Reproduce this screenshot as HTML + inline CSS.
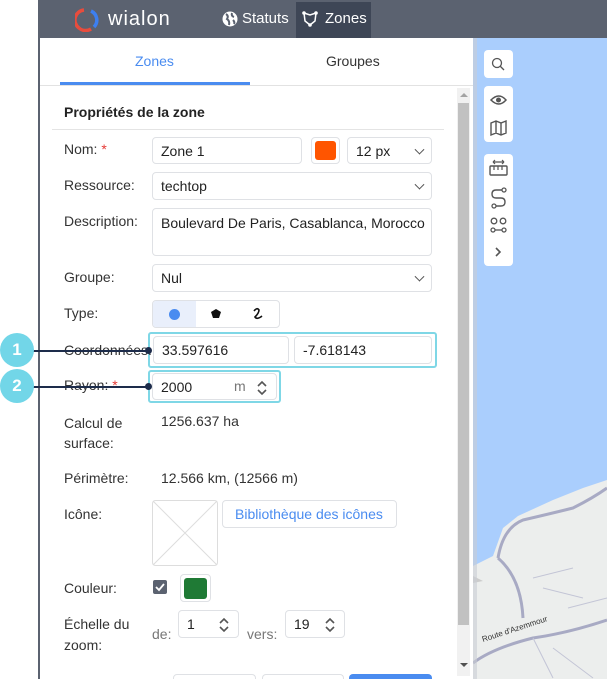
<!DOCTYPE html>
<html><head><meta charset="utf-8"><style>
*{box-sizing:border-box;margin:0;padding:0}
html,body{width:607px;height:679px;overflow:hidden}
body{background:#fff;font-family:"Liberation Sans",sans-serif;font-size:14px;color:#333;position:relative}
.a{position:absolute}
.frame{left:38px;top:0;width:569px;height:679px;background:#5b6270}
.top{left:40px;top:0;width:567px;height:38px;background:#5b6270}
.panel{left:40px;top:38px;width:433px;height:641px;background:#fff}
.inp{position:absolute;border:1px solid #dfe1e5;border-radius:4px;background:#fff;padding-left:8px;display:flex;align-items:center;color:#222}
.lbl{position:absolute;left:64px;color:#333}
.chev{position:absolute;right:8px;top:50%;width:7px;height:7px;border-right:1.6px solid #555;border-bottom:1.6px solid #555;transform:translateY(-70%) rotate(45deg)}
.spin{position:absolute;right:8px;top:5px;width:12px;height:18px}
.cyan{position:absolute;border:2px solid #7fd7e6;border-radius:3px}
.circ{position:absolute;width:34px;height:34px;border-radius:50%;background:#72d6e8;color:#fff;font-weight:bold;font-size:17px;display:flex;align-items:center;justify-content:center}
.tool{position:absolute;left:484px;width:29px;background:#fff;border-radius:4px}
</style></head><body>
<div class="a frame"></div>
<div class="a top"></div>
<svg class="a" style="left:75px;top:8px" width="24" height="24" viewBox="0 0 24 24"><path d="M9 2 A10 10 0 0 0 4 20" stroke="#e84c3d" stroke-width="3.5" fill="none"/><path d="M4 20 A10 10 0 0 0 16 21" stroke="#e84c3d" stroke-width="3.5" fill="none"/><path d="M16 3 A10 10 0 0 1 19 19" stroke="#3d7ff0" stroke-width="3.5" fill="none"/></svg>
<div class="a" style="left:108px;top:8px;color:#fff;font-size:20px;letter-spacing:1px">wialon</div>
<svg class="a" style="left:222px;top:11px" width="16" height="16" viewBox="0 0 16 16"><circle cx="8" cy="8" r="7.5" fill="#fff"/><path d="M4 3 Q7 5 5 8 Q8 10 7 14 M10 2 Q9 5 12 6 M11 9 Q13 11 12 13" stroke="#5b6270" stroke-width="2" fill="none"/></svg>
<div class="a" style="left:242px;top:10px;color:#fff;font-size:15px">Statuts</div>
<div class="a" style="left:296px;top:2px;width:75px;height:36px;background:#3e4656"></div>
<svg class="a" style="left:301px;top:10px" width="18" height="18" viewBox="0 0 18 18"><path d="M3 3 L9 5 L15 3 L14 11 L9 15 L4 11 Z" stroke="#fff" stroke-width="1.5" fill="none"/><circle cx="3" cy="3" r="1.8" fill="#fff"/><circle cx="15" cy="3" r="1.8" fill="#fff"/><circle cx="9" cy="15" r="1.8" fill="#fff"/></svg>
<div class="a" style="left:325px;top:10px;color:#fff;font-size:15px">Zones</div>

<div class="a panel"></div>
<div class="a" style="left:135px;top:53px;color:#4a8cf0;font-size:14px">Zones</div>
<div class="a" style="left:326px;top:53px;color:#333;font-size:14px">Groupes</div>
<div class="a" style="left:60px;top:82px;width:190px;height:3px;background:#4a8cf0"></div>
<div class="a" style="left:40px;top:85px;width:433px;height:1px;background:#e2e2e2"></div>
<div class="a" style="left:457px;top:88px;width:13px;height:588px;background:#f1f1f1"></div>
<div class="a" style="left:458px;top:103px;width:11px;height:522px;background:#c1c1c1"></div>
<div class="a" style="left:460px;top:93px;border:4px solid transparent;border-bottom:4px solid #a3a3a3;border-top:0"></div>
<div class="a" style="left:460px;top:663px;border:4px solid transparent;border-top:4px solid #505050;border-bottom:0"></div>

<div class="a" style="left:64px;top:104px;font-weight:bold;color:#222;font-size:14px">Propriétés de la zone</div>
<div class="a" style="left:52px;top:129px;width:392px;height:1px;background:#e4e4e4"></div>

<div class="lbl" style="top:141px">Nom: <span style="color:#e53935">*</span></div>
<div class="inp" style="left:152px;top:137px;width:150px;height:27px">Zone 1</div>
<div class="inp" style="left:311px;top:137px;width:29px;height:27px;padding:3px"><div style="width:21px;height:19px;background:#ff5500;border-radius:3px"></div></div>
<div class="inp" style="left:347px;top:137px;width:85px;height:27px">12 px<div class="chev"></div></div>

<div class="lbl" style="top:177px">Ressource:</div>
<div class="inp" style="left:152px;top:172px;width:280px;height:28px">techtop<div class="chev"></div></div>

<div class="lbl" style="top:213px">Description:</div>
<div class="inp" style="left:152px;top:208px;width:280px;height:48px;align-items:flex-start;padding-top:6px">Boulevard De Paris, Casablanca, Morocco</div>

<div class="lbl" style="top:269px">Groupe:</div>
<div class="inp" style="left:152px;top:264px;width:280px;height:28px">Nul<div class="chev"></div></div>

<div class="lbl" style="top:305px">Type:</div>
<div class="a" style="left:152px;top:300px;width:128px;height:28px;border:1px solid #dfe1e5;border-radius:4px;overflow:hidden">
<div class="a" style="left:0;top:0;width:43px;height:26px;background:#e9effb"></div>
<div class="a" style="left:16px;top:8px;width:11px;height:11px;border-radius:50%;background:#4a8cf0"></div>
<svg class="a" style="left:57px;top:7px" width="12" height="12" viewBox="0 0 12 12"><path d="M6 1 L11 4 L9 10 L3 10 L1 4 Z" fill="#111"/></svg>
<svg class="a" style="left:99px;top:6px" width="12" height="14" viewBox="0 0 12 14"><path d="M2 4 Q5 0 7 3 Q7 6 3 10 Q5 13 10 9" stroke="#111" stroke-width="1.6" fill="none"/></svg>
</div>

<div class="cyan" style="left:148px;top:332px;width:289px;height:36px"></div>
<div class="lbl" style="top:342px">Coordonnées:</div>
<div class="inp" style="left:153px;top:336px;width:136px;height:28px">33.597616</div>
<div class="inp" style="left:294px;top:336px;width:138px;height:28px">-7.618143</div>

<div class="cyan" style="left:148px;top:370px;width:133px;height:33px"></div>
<div class="lbl" style="top:377px">Rayon: <span style="color:#e53935">*</span></div>
<div class="inp" style="left:152px;top:373px;width:125px;height:27px">2000<span class="a" style="left:81px;top:4px;color:#777">m</span>
<svg class="spin" viewBox="0 0 12 18"><path d="M2 7 L6 3 L10 7 M2 11 L6 15 L10 11" stroke="#555" stroke-width="1.6" fill="none"/></svg></div>

<div class="a" style="left:33px;top:350px;width:115px;height:1.5px;background:#1d2c4b"></div>
<div class="a" style="left:145px;top:347px;width:7px;height:7px;border-radius:50%;background:#1d2c4b"></div>
<div class="a" style="left:33px;top:386px;width:115px;height:1.5px;background:#1d2c4b"></div>
<div class="a" style="left:145px;top:383px;width:7px;height:7px;border-radius:50%;background:#1d2c4b"></div>
<div class="circ" style="left:0;top:333px">1</div>
<div class="circ" style="left:0;top:369px">2</div>

<div class="lbl" style="top:413px;line-height:20px">Calcul de<br>surface:</div>
<div class="a" style="left:161px;top:413px">1256.637 ha</div>
<div class="lbl" style="top:470px">Périmètre:</div>
<div class="a" style="left:161px;top:470px">12.566 km, (12566 m)</div>

<div class="lbl" style="top:506px">Icône:</div>
<svg class="a" style="left:152px;top:500px" width="66" height="66"><rect x="0.5" y="0.5" width="65" height="65" rx="3" fill="#fff" stroke="#ddd"/><path d="M1 1 L65 65 M65 1 L1 65" stroke="#ddd"/></svg>
<div class="inp" style="left:222px;top:500px;width:175px;height:28px;color:#4a8cf0;padding-left:12px">Bibliothèque des icônes</div>

<div class="lbl" style="top:580px">Couleur:</div>
<div class="a" style="left:153px;top:580px;width:14px;height:14px;background:#5b6270;border-radius:2px"><svg width="14" height="14"><path d="M3 7 L6 10 L11 4" stroke="#fff" stroke-width="1.8" fill="none"/></svg></div>
<div class="inp" style="left:180px;top:574px;width:31px;height:28px;padding:3px"><div style="width:23px;height:21px;background:#1f7a35;border-radius:3px"></div></div>

<div class="lbl" style="top:614px;line-height:21px">Échelle du<br>zoom:</div>
<div class="a" style="left:152px;top:626px;color:#777">de:</div>
<div class="inp" style="left:178px;top:610px;width:61px;height:28px">1<svg class="spin" viewBox="0 0 12 18"><path d="M2 7 L6 3 L10 7 M2 11 L6 15 L10 11" stroke="#555" stroke-width="1.6" fill="none"/></svg></div>
<div class="a" style="left:247px;top:626px;color:#777">vers:</div>
<div class="inp" style="left:285px;top:610px;width:60px;height:28px">19<svg class="spin" viewBox="0 0 12 18"><path d="M2 7 L6 3 L10 7 M2 11 L6 15 L10 11" stroke="#555" stroke-width="1.6" fill="none"/></svg></div>

<div class="inp" style="left:173px;top:674px;width:83px;height:5px;border-bottom:0;border-radius:4px 4px 0 0"></div>
<div class="inp" style="left:262px;top:674px;width:82px;height:5px;border-bottom:0;border-radius:4px 4px 0 0"></div>
<div class="a" style="left:349px;top:674px;width:83px;height:5px;background:#4a8cf0;border-radius:4px 4px 0 0"></div>

<svg class="a" style="left:473px;top:38px" width="134" height="641" viewBox="0 0 134 641">
<rect width="134" height="641" fill="#aacefd"/>
<path d="M0 528 L20 518 L30 490 L45 478 L80 462 L110 450 L134 442 L134 641 L0 641 Z" fill="#eceeed"/>
<path d="M0 625 Q20 610 60 600 Q95 595 134 582" stroke="#a8aac4" stroke-width="3" fill="none"/>
<path d="M25 520 Q30 490 50 482 Q80 475 100 470 Q120 460 134 450" stroke="#a8aac4" stroke-width="3" fill="none"/>
<path d="M25 520 Q48 540 50 580" stroke="#a8aac4" stroke-width="3" fill="none"/>
<path d="M60 540 L100 530 M70 550 L110 560 M60 600 L80 640 M80 610 L120 640 M95 570 L134 560" stroke="#c3c5d6" stroke-width="1"/>
<path d="M0 538 L10 543 L0 545 Z" fill="#ccc"/>
<rect x="0" y="0" width="4" height="641" fill="#c9cdd3" opacity="0.6"/>
<text x="10" y="604" font-size="8" fill="#333" font-family="Liberation Sans" transform="rotate(-18 10 604)">Route d'Azemmour</text>
</svg>
<div class="tool" style="top:50px;height:28px"><svg width="29" height="28"><circle cx="13" cy="13" r="4.5" stroke="#555" stroke-width="1.3" fill="none"/><path d="M16 16 L20 20" stroke="#555" stroke-width="1.3"/></svg></div>
<div class="tool" style="top:86px;height:56px"><svg width="29" height="56"><path d="M7 14 Q15 6 22 14 Q15 22 7 14 Z" stroke="#555" stroke-width="1.5" fill="none"/><circle cx="14.5" cy="14" r="2.5" fill="#555"/><path d="M7 37 L12 35 L17 37 L22 35 L22 47 L17 49 L12 47 L7 49 Z M12 35 L12 47 M17 37 L17 49" stroke="#555" stroke-width="1.4" fill="none"/></svg></div>
<div class="tool" style="top:154px;height:112px"><svg width="29" height="112"><path d="M9 8 L20 8 M9 8 L11 6 M9 8 L11 10 M20 8 L18 6 M20 8 L18 10" stroke="#555" stroke-width="1.2" fill="none"/><rect x="6" y="12" width="17" height="9" rx="1" stroke="#555" stroke-width="1.4" fill="none"/><path d="M10 12 L10 16 M14 12 L14 16 M18 12 L18 16" stroke="#555" stroke-width="1.2"/><path d="M20 36 L12 36 Q8 36 8 40 Q8 44 12 44 L17 44 Q21 44 21 48 Q21 52 17 52 L10 52" stroke="#555" stroke-width="1.4" fill="none"/><circle cx="20" cy="36" r="2" fill="#fff" stroke="#555" stroke-width="1.3"/><circle cx="10" cy="52" r="2" fill="#fff" stroke="#555" stroke-width="1.3"/><circle cx="10" cy="67" r="2.8" stroke="#555" stroke-width="1.3" fill="none"/><circle cx="19" cy="67" r="2.8" stroke="#555" stroke-width="1.3" fill="none"/><path d="M10 76 L19 76" stroke="#555" stroke-width="1.3"/><circle cx="9" cy="76" r="2" fill="#fff" stroke="#555" stroke-width="1.3"/><circle cx="20" cy="76" r="2" fill="#fff" stroke="#555" stroke-width="1.3"/><path d="M12 94 L16 98 L12 102" stroke="#555" stroke-width="1.6" fill="none"/></svg></div>
</body></html>
